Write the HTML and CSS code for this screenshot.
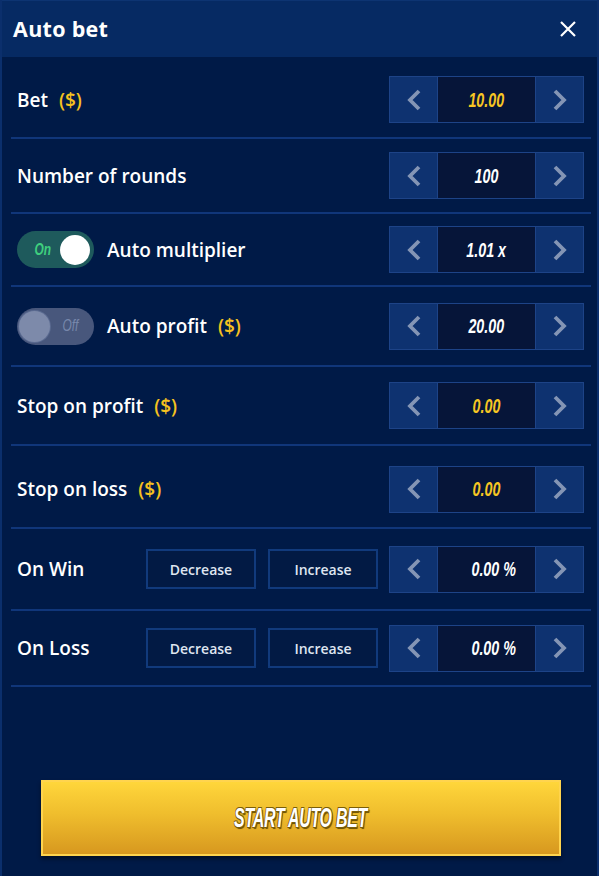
FILE: index.html
```html
<!DOCTYPE html>
<html>
<head>
<meta charset="utf-8">
<link rel="stylesheet" href="styles.css">
</head>
<body>
<div class="panel">
  <div class="header">
    <div class="title">Auto bet</div>
    <svg class="close" width="18" height="18" viewBox="0 0 18 18"><path d="M2 2 L16 16 M16 2 L2 16" stroke="#fff" stroke-width="2.2" fill="none"/></svg>
  </div>
  <div class="body">
    <div class="row h80 shift">
      <div class="label">Bet <span class="cur">($)</span></div>
      <div class="stepper">
        <div class="sbtn"><svg width="16" height="22" viewBox="0 0 16 22"><polyline points="13,2 4,11 13,20" class="chev"/></svg></div>
        <div class="val yellow"><span class="num">10.00</span></div>
        <div class="sbtn"><svg width="16" height="22" viewBox="0 0 16 22"><polyline points="3,2 12,11 3,20" class="chev"/></svg></div>
      </div>
    </div>
    <div class="row h73">
      <div class="label">Number of rounds</div>
      <div class="stepper">
        <div class="sbtn"><svg width="16" height="22" viewBox="0 0 16 22"><polyline points="13,2 4,11 13,20" class="chev"/></svg></div>
        <div class="val"><span class="num">100</span></div>
        <div class="sbtn"><svg width="16" height="22" viewBox="0 0 16 22"><polyline points="3,2 12,11 3,20" class="chev"/></svg></div>
      </div>
    </div>
    <div class="row h71">
      <div class="toggle on"><span class="ttext">On</span><span class="knob"></span></div>
      <div class="label tl">Auto multiplier</div>
      <div class="stepper">
        <div class="sbtn"><svg width="16" height="22" viewBox="0 0 16 22"><polyline points="13,2 4,11 13,20" class="chev"/></svg></div>
        <div class="val"><span class="num">1.01 x</span></div>
        <div class="sbtn"><svg width="16" height="22" viewBox="0 0 16 22"><polyline points="3,2 12,11 3,20" class="chev"/></svg></div>
      </div>
    </div>
    <div class="row h78">
      <div class="toggle off"><span class="knob"></span><span class="ttext">Off</span></div>
      <div class="label tl">Auto profit <span class="cur">($)</span></div>
      <div class="stepper">
        <div class="sbtn"><svg width="16" height="22" viewBox="0 0 16 22"><polyline points="13,2 4,11 13,20" class="chev"/></svg></div>
        <div class="val"><span class="num">20.00</span></div>
        <div class="sbtn"><svg width="16" height="22" viewBox="0 0 16 22"><polyline points="3,2 12,11 3,20" class="chev"/></svg></div>
      </div>
    </div>
    <div class="row h77">
      <div class="label">Stop on profit <span class="cur">($)</span></div>
      <div class="stepper">
        <div class="sbtn"><svg width="16" height="22" viewBox="0 0 16 22"><polyline points="13,2 4,11 13,20" class="chev"/></svg></div>
        <div class="val yellow"><span class="num">0.00</span></div>
        <div class="sbtn"><svg width="16" height="22" viewBox="0 0 16 22"><polyline points="3,2 12,11 3,20" class="chev"/></svg></div>
      </div>
    </div>
    <div class="row h81 shift">
      <div class="label">Stop on loss <span class="cur">($)</span></div>
      <div class="stepper">
        <div class="sbtn"><svg width="16" height="22" viewBox="0 0 16 22"><polyline points="13,2 4,11 13,20" class="chev"/></svg></div>
        <div class="val yellow"><span class="num">0.00</span></div>
        <div class="sbtn"><svg width="16" height="22" viewBox="0 0 16 22"><polyline points="3,2 12,11 3,20" class="chev"/></svg></div>
      </div>
    </div>
    <div class="row h80">
      <div class="label short">On Win</div>
      <div class="opts">
        <div class="opt">Decrease</div>
        <div class="opt">Increase</div>
      </div>
      <div class="stepper">
        <div class="sbtn"><svg width="16" height="22" viewBox="0 0 16 22"><polyline points="13,2 4,11 13,20" class="chev"/></svg></div>
        <div class="val"><span class="num pct">0.00 %</span></div>
        <div class="sbtn"><svg width="16" height="22" viewBox="0 0 16 22"><polyline points="3,2 12,11 3,20" class="chev"/></svg></div>
      </div>
    </div>
    <div class="row h75">
      <div class="label short">On Loss</div>
      <div class="opts">
        <div class="opt">Decrease</div>
        <div class="opt">Increase</div>
      </div>
      <div class="stepper">
        <div class="sbtn"><svg width="16" height="22" viewBox="0 0 16 22"><polyline points="13,2 4,11 13,20" class="chev"/></svg></div>
        <div class="val"><span class="num pct">0.00 %</span></div>
        <div class="sbtn"><svg width="16" height="22" viewBox="0 0 16 22"><polyline points="3,2 12,11 3,20" class="chev"/></svg></div>
      </div>
    </div>
  </div>
  <div class="footer">
    <div class="start"><span class="start-text">START AUTO BET</span></div>
  </div>
</div>
</body>
</html>
```
FILE: styles.css
```css
* { box-sizing: border-box; }
html, body { margin: 0; padding: 0; background: #001a47; }
.panel {
  width: 599px;
  height: 876px;
  background: #001a47;
  border-left: 2px solid #0b2f6c;
  border-right: 2px solid #0b2f6c;
  display: flex;
  flex-direction: column;
  font-family: "Open Sans", "DejaVu Sans", sans-serif;
  color: #fff;
}
.header {
  height: 57px;
  background: #062a63;
  border-top: 1px solid #0d3472;
  display: flex;
  align-items: center;
  justify-content: space-between;
  padding: 0 20px 0 11px;
}
.title {
  font-size: 21.5px;
  font-weight: 700;
  letter-spacing: 0.3px;
  padding-bottom: 2px;
}
.close { display: block; }
.body {
  padding: 0 6px 0 9px;
}
.row {
  display: flex;
  align-items: center;
  padding: 0 7px 0 6px;
  border-bottom: 2px solid #10367a;
}
.h80 { height: 82px; }
.h73 { height: 75px; }
.h71 { height: 73px; }
.h78 { height: 80px; }
.h77 { height: 79px; }
.h81 { height: 83px; }
.h75 { height: 76px; }
.shift { padding-top: 5px; }
.label {
  font-size: 19px;
  font-weight: 600;
  flex: 1;
  white-space: nowrap;
}
.label.short { flex: 0 0 129px; }
.label.tl { margin-left: 13px; }
.cur { color: #f5c11f; margin-left: 6px; }
.stepper {
  width: 195px;
  height: 47px;
  display: flex;
  border: 1px solid #1d4387;
  margin-left: 11px;
  flex: 0 0 195px;
}
.sbtn {
  width: 47px;
  background: #0e3270;
  display: flex;
  align-items: center;
  justify-content: center;
}
.chev {
  fill: none;
  stroke: #8495b5;
  stroke-width: 3.8;
}
.val {
  flex: 1;
  background: #061539;
  border-left: 1px solid #1d4387;
  border-right: 1px solid #1d4387;
  display: flex;
  align-items: center;
  justify-content: center;
  font-family: "Liberation Sans", sans-serif;
  font-style: italic;
  font-weight: 700;
  font-size: 21px;
  color: #fff;
}
.num {
  display: inline-block;
  transform: scaleX(0.68);
  white-space: nowrap;
}
.pct { margin-left: 14px; }
.val.yellow { color: #f7c623; }
.toggle {
  width: 77px;
  height: 37px;
  border-radius: 19px;
  display: flex;
  align-items: center;
  flex: 0 0 77px;
}
.toggle.on {
  background: #1e5a5c;
  justify-content: space-between;
  padding: 0 4px 0 14px;
}
.toggle.off {
  background: #48577c;
  justify-content: space-between;
  padding: 0 12px 0 2px;
}
.knob {
  width: 30px;
  height: 30px;
  border-radius: 50%;
  background: #fff;
}
.toggle.off .knob {
  width: 31px;
  height: 31px;
  background: #7d8aaa;
  box-shadow: 0 0 0 1px #5a6a90;
}
.ttext {
  font-family: "Liberation Sans", sans-serif;
  font-style: italic;
  font-weight: 700;
  font-size: 17px;
  display: inline-block;
  transform: scaleX(0.7);
}
.toggle.on .ttext { color: #3fcf7e; }
.toggle.off .ttext { color: #7787ab; font-weight: 400; }
.opts {
  display: flex;
  gap: 12px;
}
.opt {
  width: 110px;
  height: 40px;
  border: 2px solid #113a7c;
  background: #021a44;
  display: flex;
  align-items: center;
  justify-content: center;
  font-size: 14px;
  font-weight: 600;
  color: #dfe5f0;
}
.footer {
  flex: 1;
  display: flex;
  align-items: flex-end;
  justify-content: center;
  padding: 0 0 20px 2px;
}
.start {
  width: 520px;
  height: 76px;
  border: 2px solid #ffd44e;
  background: linear-gradient(#ffd63b, #efbd2d 45%, #d7981f);
  box-shadow: 0 3px 4px rgba(0,0,0,0.45);
  display: flex;
  align-items: center;
  justify-content: center;
  font-family: "Liberation Sans", sans-serif;
  font-style: italic;
  font-weight: 700;
  font-size: 28px;
  letter-spacing: -0.5px;
  color: #fff;
}
.start-text {
  display: inline-block;
  transform: scaleX(0.57);
  white-space: nowrap;
  text-shadow: 1px 1px 0 #7b5e08, -1px -1px 0 #7b5e08, 1px -1px 0 #7b5e08, -1px 1px 0 #7b5e08, 2px 2px 1px #6a5006;
}
```
